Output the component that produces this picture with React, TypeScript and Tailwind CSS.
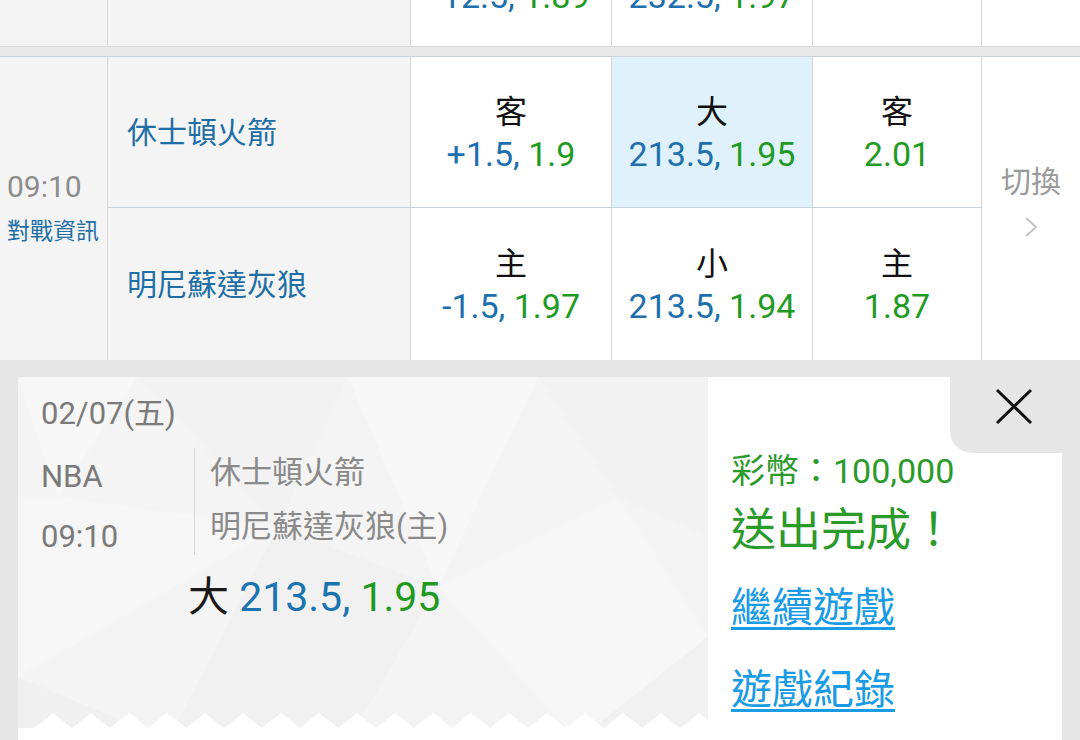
const FONT = "font-['Roboto','Noto_Sans_CJK_TC',sans-serif]";

const blue = 'text-[#1d6fae]';
const green = 'text-[#1f9a23]';

type Odd = { label: string; line?: string; price: string; selected?: boolean; w: string };

const rows: Odd[][] = [
  [
    { label: '客', line: '+1.5,', price: '1.9', w: 'w-[201px]' },
    { label: '大', line: '213.5,', price: '1.95', w: 'w-[201px]', selected: true },
    { label: '客', price: '2.01', w: 'w-[169px]' },
  ],
  [
    { label: '主', line: '-1.5,', price: '1.97', w: 'w-[201px]' },
    { label: '小', line: '213.5,', price: '1.94', w: 'w-[201px]' },
    { label: '主', price: '1.87', w: 'w-[169px]' },
  ],
];

const teams = ['休士頓火箭', '明尼蘇達灰狼'];

const OddCell = ({ odd }: { odd: Odd }) => (
  <div
    className={`${odd.w} h-full border-r border-[#d6d6d6] flex flex-col items-center justify-center pt-[2px] ${
      odd.selected ? 'bg-[#dff2fb]' : 'bg-white'
    }`}
  >
    <div className="text-[32px] leading-[42px] text-[#111]">{odd.label}</div>
    <div className="text-[34px] leading-[42px] whitespace-nowrap">
      {odd.line && <span className={blue}>{odd.line} </span>}
      <span className={green}>{odd.price}</span>
    </div>
  </div>
);

const Pattern = () => (
  <svg className="absolute inset-0" width="690" height="363" viewBox="0 0 690 363">
    <rect width="690" height="363" fill="#f4f4f4" />
    <polygon points="0,0 120,0 40,120" fill="#f7f7f7" />
    <polygon points="120,0 330,0 260,150" fill="#f2f2f2" />
    <polygon points="330,0 520,0 420,210" fill="#f7f7f7" />
    <polygon points="520,0 690,0 690,160 600,120" fill="#f2f2f2" />
    <polygon points="0,120 40,120 260,150 0,300" fill="#f6f6f6" />
    <polygon points="260,150 420,210 330,363 150,363" fill="#f1f1f1" />
    <polygon points="420,210 600,120 690,260 560,363" fill="#f6f6f6" />
    <polygon points="0,300 150,363 0,363" fill="#f0f0f0" />
    <polygon points="560,363 690,260 690,363" fill="#f1f1f1" />
  </svg>
);

const Zigzag = () => {
  const pts: string[] = [];
  for (let x = -3; x < 700; x += 38) {
    pts.push(`${x + 19},15`, `${x + 38},0`);
  }
  return (
    <svg className="absolute left-0 bottom-0" width="690" height="27" viewBox="0 0 690 27">
      <polygon points={`0,15 ${pts.join(' ')} 690,27 0,27`} fill="#ffffff" />
    </svg>
  );
};

export default function App() {
  return (
    <div className={`w-[1080px] h-[740px] overflow-hidden bg-[#e6e6e6] ${FONT}`}>
      {/* previous game, cut off at the top */}
      <div className="flex h-[46px] bg-white">
        <div className="w-[108px] bg-[#f4f4f4] border-r border-[#d6d6d6]" />
        <div className="w-[303px] bg-[#f4f4f4] border-r border-[#d6d6d6]" />
        <div className="w-[201px] border-r border-[#d6d6d6] overflow-hidden flex justify-center">
          <div className="-mt-[26px] text-[34px] leading-[44px] whitespace-nowrap">
            <span className={blue}>-12.5, </span>
            <span className={green}>1.89</span>
          </div>
        </div>
        <div className="w-[201px] border-r border-[#d6d6d6] overflow-hidden flex justify-center">
          <div className="-mt-[26px] text-[34px] leading-[44px] whitespace-nowrap">
            <span className={blue}>232.5, </span>
            <span className={green}>1.97</span>
          </div>
        </div>
        <div className="w-[169px] border-r border-[#d6d6d6]" />
        <div className="flex-1" />
      </div>
      <div className="h-[11px] bg-[#e9e9e9] border-t border-[#d9d9d9] border-b border-b-[#c9d3d9]" />

      {/* game */}
      <div className="flex h-[303px] bg-white">
        <div className="w-[108px] bg-[#f4f4f4] border-r border-[#d6d6d6] flex flex-col justify-center pl-[7px] pt-[2px]">
          <div className="text-[30px] leading-[44px] text-[#8c8c8c]">09:10</div>
          <div className="text-[23px] leading-[46px] text-[#1f6fa6] whitespace-nowrap">對戰資訊</div>
        </div>
        <div className="flex flex-col">
          {rows.map((row, i) => (
            <div
              key={i}
              className={`flex ${i === 0 ? 'h-[151px] border-b border-[#c5d3dc]' : 'h-[152px]'}`}
            >
              <div className="w-[303px] h-full bg-[#f4f4f4] border-r border-[#d6d6d6] flex items-center pl-[19px]">
                <span className="text-[30px] text-[#1f6fa6]">{teams[i]}</span>
              </div>
              {row.map((odd, j) => (
                <OddCell key={j} odd={odd} />
              ))}
            </div>
          ))}
        </div>
        <div className="flex-1 flex flex-col items-center justify-center pb-[20px]">
          <div className="text-[30px] leading-[44px] text-[#9a9a9a]">切換</div>
          <svg width="14" height="22" viewBox="0 0 14 22" className="mt-[12px]">
            <polyline points="2,2 12,11 2,20" fill="none" stroke="#c2c2c2" strokeWidth="2" />
          </svg>
        </div>
      </div>

      {/* bet receipt */}
      <div className="pt-[17px] pl-[18px]">
        <div className="flex w-[1044px] h-[363px]">
          <div className="relative w-[690px] h-full overflow-hidden">
            <Pattern />
            <Zigzag />
            <div className="relative pl-[23px] pt-[20px]">
              <div className="text-[31px] leading-[34px] text-[#7a7a7a]">02/07(五)</div>
              <div className="flex h-[107px] mt-[17px]">
                <div className="w-[153px] text-[31px] text-[#7a7a7a]">
                  <div className="leading-[58px]">NBA</div>
                  <div className="leading-[62px]">09:10</div>
                </div>
                <div className="border-l border-[#d9d9d9] pl-[15px] text-[31px] text-[#8a8a8a] whitespace-nowrap">
                  <div className="leading-[50px]">休士頓火箭</div>
                  <div className="leading-[58px]">明尼蘇達灰狼(主)</div>
                </div>
              </div>
              <div className="ml-[147px] mt-[19px] text-[41px] leading-[46px] whitespace-nowrap">
                <span className="text-[#1a1a1a]">大 </span>
                <span className="text-[#1a74b0]">213.5, </span>
                <span className="text-[#1f9a1f]">1.95</span>
              </div>
            </div>
          </div>
          <div className="relative flex-1 bg-white pl-[23px]">
            <div className="absolute top-0 right-0 w-[112px] h-[76px] bg-[#e6e6e6] rounded-bl-[22px]">
              <svg className="absolute left-[45px] top-[11px]" width="38" height="37" viewBox="0 0 38 37">
                <path d="M2 2 L36 35 M36 2 L2 35" stroke="#111" strokeWidth="3" />
              </svg>
            </div>
            <div className="pt-[72px] text-[34px] leading-[44px] text-[#2a9a2a] whitespace-nowrap">彩幣：100,000</div>
            <div className="mt-[10px] text-[45px] leading-[56px] text-[#2a9a2a] whitespace-nowrap">送出完成！</div>
            <div className="mt-[24px] text-[41px] leading-[50px] text-[#1a9be6] underline decoration-[3px] underline-offset-[5px]">
              繼續遊戲
            </div>
            <div className="mt-[32px] text-[41px] leading-[50px] text-[#1a9be6] underline decoration-[3px] underline-offset-[5px]">
              遊戲紀錄
            </div>
          </div>
        </div>
      </div>
    </div>
  );
}
